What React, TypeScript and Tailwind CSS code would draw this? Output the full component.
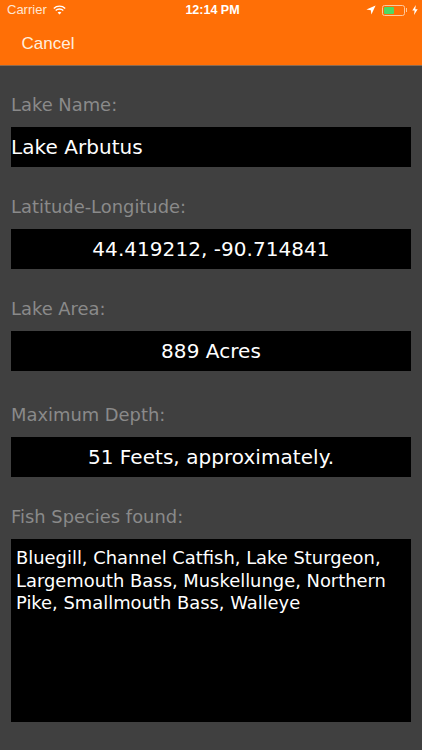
import React from 'react';

const font = { fontFamily: '"DejaVu Sans", Verdana, sans-serif' };

function Field({ label, value, left, className }: { label: string; value: string; left?: boolean; className: string }) {
  return (
    <div className={className}>
      <div className="h-[20px] text-[17.9px] leading-[20px] text-[#8a8a8a]">{label}</div>
      <div className={`mt-[12px] h-[40px] bg-black flex items-center text-[20px] tracking-[0.05px] text-white ${left ? 'justify-start' : 'justify-center'}`}>
        {value}
      </div>
    </div>
  );
}

export default function App() {
  return (
    <div className="w-[422px] h-[750px] overflow-hidden bg-[#404040] flex flex-col">
      <div className="h-[65px] bg-[#ff6f06] border-b border-[#8a6a50] box-content -mb-px shrink-0 relative">
        <div className="h-[20px] pl-[7px] pr-[4px] flex items-center justify-between text-white font-['Liberation_Sans',sans-serif] text-[13px]">
          <div className="flex items-center gap-[6px] w-[120px] text-[#ffe6d2]">
            <span>Carrier</span>
            <svg width="13" height="10" viewBox="0 0 13 10" fill="none" stroke="#fff" strokeWidth="1.4">
              <path d="M0.8 3.4C4 0.4 9 0.4 12.2 3.4" />
              <path d="M2.7 5.4C4.8 3.5 8.2 3.5 10.3 5.4" />
              <path d="M6.5 9.6L4.6 7.4C5.7 6.5 7.3 6.5 8.4 7.4Z" fill="#fff" stroke="none" />
            </svg>
          </div>
          <div className="font-bold text-[12.5px]">12:14 PM</div>
          <div className="flex items-center justify-end w-[120px] gap-[6px]">
            <svg width="10" height="10" viewBox="0 0 10 10" fill="#fff">
              <path d="M9.6 0.4L0.4 4.6L4.8 5.2L5.4 9.6Z" />
            </svg>
            <div className="flex items-center gap-[1px]">
              <div className="w-[23px] h-[11px] rounded-[2.5px] border border-[#ffc89c] p-[1px]">
                <div className="w-[10px] h-full bg-[#4cd964] rounded-[1px]" />
              </div>
              <div className="w-[1px] h-[4px] bg-[#ffc89c]" />
            </div>
            <svg width="6" height="10" viewBox="0 0 6 10" fill="#fff" className="-ml-[1px]">
              <path d="M3.8 0L0.3 5.6H2.6L2 10L5.7 4.2H3.3Z" />
            </svg>
          </div>
        </div>
        <div className="pl-[21.5px] pt-[12px] font-['Liberation_Sans',sans-serif] text-[17px] leading-[24px] text-[#ffeedd]">Cancel</div>
      </div>
      <div className="px-[11px] flex-1 flex flex-col" style={font}>
        <Field className="mt-[30px]" label="Lake Name:" value="Lake Arbutus" left />
        <Field className="mt-[30px]" label="Latitude-Longitude:" value="44.419212, -90.714841" />
        <Field className="mt-[30px]" label="Lake Area:" value="889 Acres" />
        <Field className="mt-[34px]" label="Maximum Depth:" value="51 Feets, approximately." />
        <div className="mt-[30px]">
          <div className="h-[20px] text-[17.9px] leading-[20px] text-[#8a8a8a]">Fish Species found:</div>
          <div className="mt-[12px] h-[183px] bg-black px-[5px] pt-[8px] text-[17.9px] leading-[22.5px] text-white">
            Bluegill, Channel Catfish, Lake Sturgeon, Largemouth Bass, Muskellunge, Northern Pike, Smallmouth Bass, Walleye
          </div>
        </div>
      </div>
    </div>
  );
}
